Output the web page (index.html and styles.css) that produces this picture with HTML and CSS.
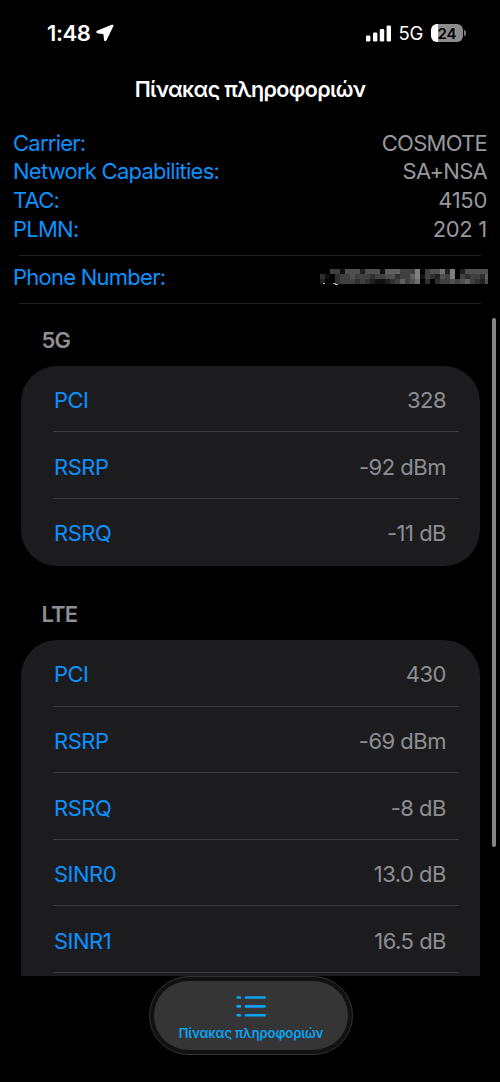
FILE: index.html
```html
<!DOCTYPE html>
<html lang="el">
<head>
<meta charset="utf-8">
<meta name="viewport" content="width=device-width, initial-scale=1">
<title>Πίνακας πληροφοριών</title>
<link rel="stylesheet" href="styles.css">
</head>
<body>
<div class="screen">
  <header class="status">
    <span class="time">1:48</span>
    <svg class="location" width="18" height="18" viewBox="0 0 18 18"><path d="M16 1.3 1.2 7.4 Q.4 8.2 1.4 8.7 L8 9.6 8.6 15.9 Q9.2 17.1 10 16 L16.8 2 Q17.1 1 16 1.3Z" fill="#fff" stroke="#fff" stroke-width="1.2" stroke-linejoin="round"/></svg>
    <svg class="signal" width="26" height="17" viewBox="0 0 26 17" fill="#fff"><rect x="0" y="10.5" width="4.4" height="6" rx="1.3"/><rect x="7" y="7.5" width="4.4" height="9" rx="1.3"/><rect x="13.8" y="4" width="4.4" height="12.5" rx="1.3"/><rect x="20.6" y=".5" width="4.4" height="16" rx="1.3"/></svg>
    <span class="network">5G</span>
    <span class="battery"><span class="level">24</span><i class="cap"></i></span>
  </header>
  <h1 class="title">Πίνακας πληροφοριών</h1>
  <main class="content">
    <dl class="summary">
      <div class="info"><dt>Carrier:</dt><dd>COSMOTE</dd></div>
      <div class="info"><dt>Network Capabilities:</dt><dd>SA+NSA</dd></div>
      <div class="info"><dt>TAC:</dt><dd class="digits">4150</dd></div>
      <div class="info"><dt>PLMN:</dt><dd class="digits">202 1</dd></div>
    </dl>
    <dl class="phone">
      <div class="info"><dt>Phone Number:</dt><dd><svg class="masked" id="masked" width="168" height="16" viewBox="0 0 168 16" shape-rendering="crispEdges"></svg></dd></div>
    </dl>
    <h2 class="heading">5G</h2>
    <dl class="card">
      <div class="row"><dt>PCI</dt><dd>328</dd></div>
      <div class="row"><dt>RSRP</dt><dd>-92 dBm</dd></div>
      <div class="row"><dt>RSRQ</dt><dd>-11 dB</dd></div>
    </dl>
    <h2 class="heading lte">LTE</h2>
    <dl class="card">
      <div class="row"><dt>PCI</dt><dd>430</dd></div>
      <div class="row"><dt>RSRP</dt><dd>-69 dBm</dd></div>
      <div class="row"><dt>RSRQ</dt><dd>-8 dB</dd></div>
      <div class="row"><dt>SINR0</dt><dd>13.0 dB</dd></div>
      <div class="row"><dt>SINR1</dt><dd>16.5 dB</dd></div>
      <div class="row"></div>
    </dl>
  </main>
  <i class="scrollbar"></i>
  <nav class="tabbar">
    <a class="tab">
      <svg class="list" width="30" height="23" viewBox="0 0 30 23" stroke="#0ba4f5" stroke-width="2.6" stroke-linecap="round"><path d="M1.6 2.5H4M10 2.5H28.6M1.6 11.4H4M10 11.4H28.6M1.6 20.2H4M10 20.2H28.6"/></svg>
      <span class="label">Πίνακας πληροφοριών</span>
    </a>
  </nav>
</div>
<script src="mask.js"></script>
</body>
</html>
```
FILE: mask.js
```js
// Mosaic over the hidden number: one digit of brightness per cell.
const rows = [
  "0044155525551666444804557280255555",
  "3103445444344553446814325480434436",
  "2003444343211234645703034454564325"
];
const svg = document.getElementById("masked");
const addRect = (x, y, width, height, grey) => {
  const cell = document.createElementNS("http://www.w3.org/2000/svg", "rect");
  Object.entries({ x, y, width, height, fill: `rgb(${grey},${grey},${grey})` })
    .forEach(([name, value]) => cell.setAttribute(name, value));
  svg.append(cell);
};
rows.forEach((row, y) => [...row].forEach((level, x) => addRect(x * 5, y * 5, 5, 5, Number(level) * 16)));
addRect(3, 14, 2, 1, 190);
addRect(13, 14, 3, 1, 170);
addRect(15, 15, 3, 1, 190);
```
FILE: styles.css
```css
* { box-sizing: border-box; }
body { margin: 0; background: #000; font-family: Inter, "Noto Sans", sans-serif; }
dl, dd, h1, h2 { margin: 0; }
.screen { position: relative; width: 500px; height: 1082px; overflow: hidden; background: #000; display: flex; flex-direction: column; }
.status { height: 66px; padding: 0 37px 0 47px; display: flex; align-items: center; color: #fff; }
.time { font-size: 22px; font-weight: 600; letter-spacing: -0.4px; }
.location { margin-left: 6px; }
.signal { margin-left: auto; }
.network { margin-left: 7px; font-size: 18.5px; letter-spacing: -0.3px; }
.battery { position: relative; margin-left: 8px; width: 32px; height: 18px; border-radius: 6px; background: linear-gradient(to right, #fff 7px, #8c8c8c 7px); display: flex; align-items: center; justify-content: center; }
.level { color: #000; font-size: 15px; font-weight: 600; }
.cap { position: absolute; left: 33px; top: 6px; width: 2px; height: 6px; border-radius: 0 3px 3px 0; background: #777; }
.title { height: 62px; padding-top: 9px; color: #fff; text-align: center; font-size: 21.5px; font-weight: 600; line-height: 28px; letter-spacing: -0.62px; }
.content { height: 848px; overflow: hidden; font-size: 22px; letter-spacing: -0.5px; }
.info, .row { display: flex; justify-content: space-between; }
.info { height: 28.7px; line-height: 29px; padding: 0 13px; color: #98989d; letter-spacing: -0.75px; }
.info .digits { letter-spacing: -0.3px; }
dt { color: #0d91fc; }
.summary { height: 126.5px; padding-top: 0.7px; }
.phone { position: relative; height: 49px; padding-top: 8px; }
.phone::before, .phone::after { content: ""; position: absolute; left: 19px; right: 19px; height: 1px; background: #202022; }
.phone::before { top: 0; }
.phone::after { top: 48px; }
.masked { display: block; margin: 6px -1px 0 0; }
.heading { color: #8e8e93; font-size: 22px; font-weight: 600; line-height: 28px; padding-left: 41.5px; height: 62.5px; padding-top: 22px; letter-spacing: -0.8px; }
.heading.lte { height: 74.6px; padding-top: 34.6px; }
.card { margin: 0 20.5px; border-radius: 36px; background: #1c1c1e; overflow: hidden; }
.row { position: relative; height: 66.6px; padding: 0 33.5px; line-height: 68px; color: #8e8e93; }
.row:not(:last-child)::after { content: ""; position: absolute; left: 32.5px; right: 20.5px; bottom: 0.4px; height: 1px; background: #3a3a3c; }
.scrollbar { position: absolute; left: 492px; top: 318px; width: 4px; height: 529px; border-radius: 2px; background: #858585; }
.tabbar { position: absolute; left: 149px; top: 976px; width: 204px; height: 79px; border-radius: 40px; padding: 4px; background: #111; border: 1px solid #343436; }
.tab { height: 69px; border-radius: 35px; background: #353535; display: flex; flex-direction: column; align-items: center; padding-top: 14px; }
.list { display: block; }
.label { margin-top: 6px; color: #0ba4f5; font-size: 13px; font-weight: 600; line-height: 19px; letter-spacing: -0.1px; white-space: nowrap; }
```
